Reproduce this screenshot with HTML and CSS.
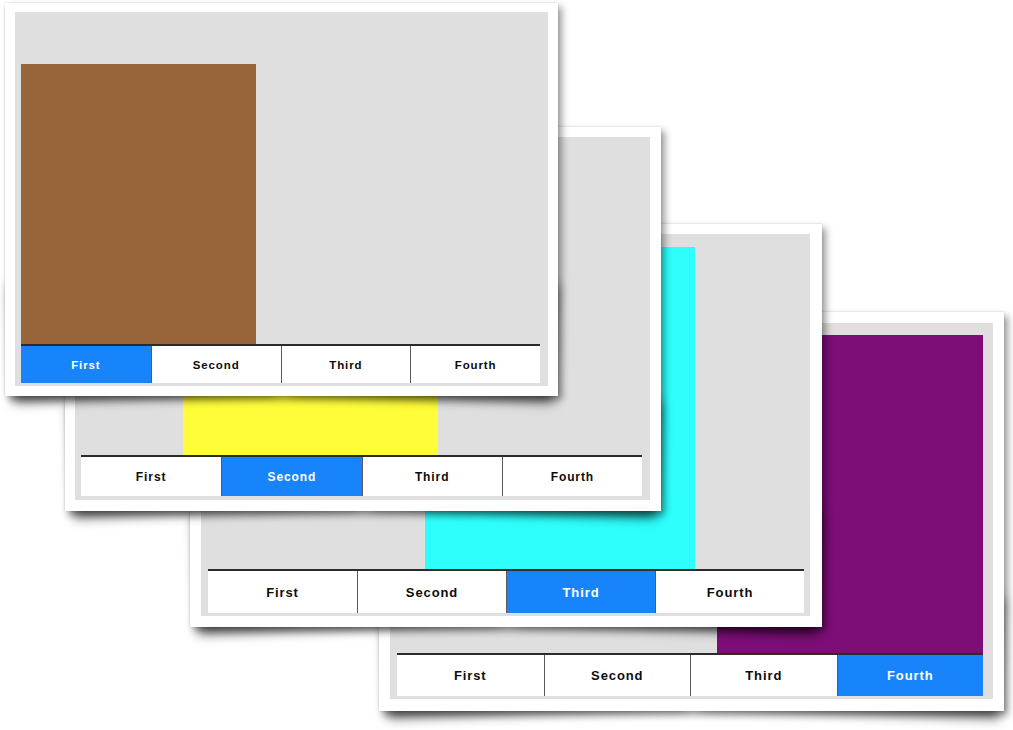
FILE: index.html
```html
<!DOCTYPE html>
<html lang="en">
<head>
    <meta charset="UTF-8">
    <meta name="viewport" content="width=device-width, initial-scale=1.0">
    <title>Tab Bar Screens</title>
    <link rel="stylesheet" href="styles.css">
</head>
<body>

    <div class="stack">

        <!-- front screenshot: first tab -->
        <div class="shot shot-1">
            <div class="frame">
                <div class="screen">
                    <div class="stage"><div class="block"></div></div>
                    <div class="tabs">
                        <div class="tab active">First</div>
                        <div class="tab">Second</div>
                        <div class="tab">Third</div>
                        <div class="tab">Fourth</div>
                    </div>
                </div>
            </div>
        </div>

        <div class="shot shot-2">
            <div class="frame">
                <div class="screen">
                    <div class="stage"><div class="block"></div></div>
                    <div class="tabs">
                        <div class="tab">First</div>
                        <div class="tab active">Second</div>
                        <div class="tab">Third</div>
                        <div class="tab">Fourth</div>
                    </div>
                </div>
            </div>
        </div>

        <div class="shot shot-3">
            <div class="frame">
                <div class="screen">
                    <div class="stage"><div class="block"></div></div>
                    <div class="tabs">
                        <div class="tab">First</div>
                        <div class="tab">Second</div>
                        <div class="tab active">Third</div>
                        <div class="tab">Fourth</div>
                    </div>
                </div>
            </div>
        </div>

        <!-- back screenshot: fourth tab -->
        <div class="shot shot-4">
            <div class="frame">
                <div class="screen">
                    <div class="stage"><div class="block"></div></div>
                    <div class="tabs">
                        <div class="tab">First</div>
                        <div class="tab">Second</div>
                        <div class="tab">Third</div>
                        <div class="tab active">Fourth</div>
                    </div>
                </div>
            </div>
        </div>

    </div>

</body>
</html>
```

FILE: styles.css
```css
body {
    margin: 0;
    background-color: #ffffff;
    font-family: "Liberation Sans", Arial, sans-serif;
}
.stack {
    position: relative;
    width: 1013px;
    height: 730px;
    overflow: hidden;
}

/* each screenshot sits on a free canvas */
.shot {
    position: absolute;
}
/* curled page shadows under the bottom corners */
.shot::before, .shot::after {
    content: "";
    position: absolute;
    z-index: -1;
    bottom: 16px;
    width: 48%;
    height: 30%;
    box-shadow: 0 18px 12px rgba(0,0,0,0.6);
}
.shot::before {
    left: 6px;
    transform: rotate(-2deg);
}
.shot::after {
    right: 2px;
    transform: rotate(2deg);
}
.frame {
    box-sizing: border-box;
    background-color: #ffffff;
    box-shadow: 4px 4px 7px rgba(0,0,0,0.38), 0 0 2px rgba(0,0,0,0.15);
}
.screen {
    box-sizing: border-box;
    height: 100%;
    display: flex;
    flex-direction: column;
    background-color: #dfdfdf;
}
.stage {
    flex: 1;
    display: flex;
}
.tabs {
    display: grid;
    grid-template-columns: repeat(4, 1fr);
    background-color: #ffffff;
    border-top: 2px solid #2b2b2b;
}
.tab {
    display: flex;
    align-items: center;
    justify-content: center;
    font-weight: bold;
    letter-spacing: 0.9px;
    color: #0c0c0c;
    border-left: 1px solid #5a5a5a;
}
.tab:first-child {
    border-left: none;
}
.tab.active {
    background-color: #1784fb;
    color: #ffffff;
}

/* first */
.shot-1 {
    left: 5px;
    top: 3px;
    z-index: 4;
}
.shot-1 .frame {
    width: 553px;
    height: 393px;
    padding: 9px 10px 10px 10px;
}
.shot-1 .screen {
    padding: 0 8px 3px 6px;
}
.shot-1 .tabs {
    height: 37px;
    font-size: 11.5px;
}
.shot-1 .block {
    background-color: #976539;
    width: 235px;
    margin-top: 52px;
}

/* second */
.shot-2 {
    left: 65px;
    top: 127px;
    z-index: 3;
}
.shot-2 .frame {
    width: 596px;
    height: 384px;
    padding: 10px 11px 11px 10px;
}
.shot-2 .screen {
    padding: 0 8px 4px 6px;
}
.shot-2 .tabs {
    height: 39px;
    font-size: 12px;
}
.shot-2 .block {
    background-color: #fffc3a;
    width: 255px;
    margin-left: 102px;
    margin-top: 60px;
}

/* third */
.shot-3 {
    left: 190px;
    top: 224px;
    z-index: 2;
}
.shot-3 .frame {
    width: 632px;
    height: 403px;
    padding: 10px 12px 11px 11px;
}
.shot-3 .screen {
    padding: 0 6px 3px 7px;
}
.shot-3 .tabs {
    height: 42px;
    font-size: 13px;
}
.shot-3 .block {
    background-color: #2efffd;
    width: 270px;
    margin-left: 217px;
    margin-top: 13px;
}

/* fourth */
.shot-4 {
    left: 379px;
    top: 312px;
    z-index: 1;
}
.shot-4 .frame {
    width: 625px;
    height: 399px;
    padding: 11px 11px 12px 11px;
}
.shot-4 .screen {
    padding: 0 10px 3px 7px;
}
.shot-4 .tabs {
    height: 41px;
    font-size: 13px;
}
.shot-4 .block {
    background-color: #7d0e78;
    width: 266px;
    margin-left: 320px;
    margin-top: 12px;
}
```
